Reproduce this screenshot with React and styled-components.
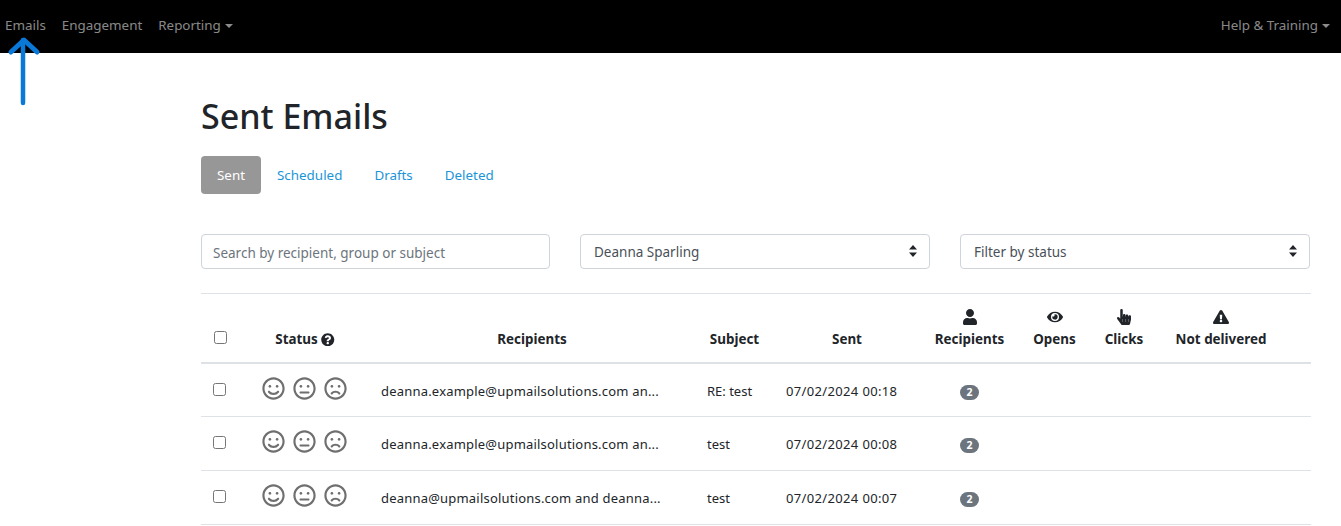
import React from "react";
import styled, { createGlobalStyle } from "styled-components";
import {
  FaUser,
  FaEye,
  FaHandPointer,
  FaExclamationTriangle,
  FaQuestionCircle,
  FaRegSmile,
  FaRegMeh,
  FaRegFrown,
} from "react-icons/fa";

const GlobalStyle = createGlobalStyle`
  * { box-sizing: border-box; }
  html, body { margin: 0; background: #fff; overflow: hidden; }
  body {
    font-family: "Noto Sans", "Open Sans", sans-serif;
    font-size: 13.5px;
    color: #212529;
  }
`;

const Nav = styled.nav`
  height: 53px;
  background: #000;
  display: flex;
  align-items: center;
  justify-content: space-between;
  padding: 0 11px 2px 5px;
`;

const NavGroup = styled.div`
  display: flex;
  gap: 16px;
`;

const NavLink = styled.a`
  color: rgba(255, 255, 255, 0.55);
  font-size: 13.4px;
  line-height: 21px;
  text-decoration: none;
  &::after {
    content: ${(p) => (p.$caret ? '""' : "none")};
    display: inline-block;
    margin-left: 4px;
    vertical-align: 2px;
    border-top: 4px solid;
    border-left: 4px solid transparent;
    border-right: 4px solid transparent;
  }
`;

const Arrow = styled.svg`
  position: absolute;
  left: 5px;
  top: 36px;
  width: 36px;
  height: 72px;
`;

const Main = styled.main`
  padding: 40px 30px 0 201px;
`;

const Title = styled.h1`
  margin: 0 0 17px;
  font-size: 34px;
  line-height: 46px;
  font-weight: 500;
`;

const Tabs = styled.div`
  display: flex;
  margin-bottom: 40px;
`;

const Tab = styled.a`
  height: 38px;
  padding: 0 16px;
  display: flex;
  align-items: center;
  border-radius: 4px;
  font-size: 13.4px;
  text-decoration: none;
  color: ${(p) => (p.$active ? "#fff" : "#1b95d8")};
  background: ${(p) => (p.$active ? "#979797" : "transparent")};
`;

const Filters = styled.div`
  display: grid;
  grid-template-columns: 349px 350px 350px;
  column-gap: 30px;
  padding-bottom: 24px;
  border-bottom: 1px solid #dee2e6;
`;

const SearchInput = styled.input`
  height: 35px;
  width: 100%;
  padding: 2px 11px 0;
  border: 1px solid #ced4da;
  border-radius: 4px;
  font: inherit;
  color: #495057;
  outline: none;
  &::placeholder { color: #6c757d; opacity: 1; }
`;

const SelectWrap = styled.div`
  position: relative;
`;

const Select = styled.select`
  height: 35px;
  width: 100%;
  padding: 0 30px 0 13px;
  appearance: none;
  background: #fff;
  border: 1px solid #ced4da;
  border-radius: 4px;
  font: inherit;
  color: #495057;
  outline: none;
`;

const SelectArrows = styled.svg`
  position: absolute;
  right: 13px;
  top: 11px;
  width: 8px;
  height: 12px;
  pointer-events: none;
`;

const Table = styled.table`
  width: 100%;
  table-layout: fixed;
  border-collapse: collapse;
`;

const Th = styled.th`
  height: 69px;
  padding: 0 0 14px;
  vertical-align: bottom;
  text-align: center;
  font-weight: 700;
  font-size: 13.4px;
  line-height: 18px;
  white-space: nowrap;
  border-bottom: 2px solid #dee2e6;
`;

const CheckTh = styled(Th)`
  padding: 0 0 18px 13px;
  text-align: left;
`;

const HeadIcon = styled.div`
  font-size: 16px;
  line-height: 16px;
  height: 21px;
  display: flex;
  justify-content: center;
  color: #212529;
`;

const HelpIcon = styled(FaQuestionCircle)`
  font-size: 13.5px;
  vertical-align: -2px;
`;

const Tr = styled.tr`
  height: ${(p) => p.$height}px;
  border-bottom: 1px solid #dee2e6;
`;

const Td = styled.td`
  padding: 2px 12px 0;
  font-size: 13px;
  letter-spacing: ${(p) => p.$spacing || 0}px;
  text-align: ${(p) => p.$align || "left"};
  white-space: nowrap;
`;

const CheckCell = styled.td`
  padding: 0 0 ${(p) => p.$lift}px 12px;
`;

const Checkbox = styled.input.attrs({ type: "checkbox" })`
  appearance: none;
  display: block;
  width: 13px;
  height: 13px;
  margin: 0;
  background: #fff;
  border: 1px solid #767676;
  border-radius: 2.5px;
`;

const Faces = styled.div`
  display: flex;
  gap: 8px;
  justify-content: center;
  padding: 0 2px ${(p) => 2 + p.$lift}px 0;
  font-size: 23px;
  color: #6f6f6f;
  line-height: 0;
`;

const Badge = styled.span`
  display: inline-block;
  min-width: 19px;
  padding: 0 6px;
  line-height: 15px;
  border-radius: 8px;
  background: #6c757d;
  color: #fff;
  font-size: 10.5px;
  font-weight: 700;
  letter-spacing: 0;
`;

const rows = [
  { to: "deanna.example@upmailsolutions.com an...", subject: "RE: test", sent: "07/02/2024 00:18", h: 53, lift: 0 },
  { to: "deanna.example@upmailsolutions.com an...", subject: "test", sent: "07/02/2024 00:08", h: 54, lift: 2 },
  { to: "deanna@upmailsolutions.com and deanna...", subject: "test", sent: "07/02/2024 00:07", h: 54, lift: 2 },
];

const colWidths = [40, 128, 326, 79, 146, 99, 71, 68, 126, 27];

const UpDown = () => (
  <SelectArrows viewBox="0 0 8 12" fill="#212529">
    <path d="M4 0 L8 4.500 L0 4.500 Z M4 12 L0 7.500 L8 7.500 Z" />
  </SelectArrows>
);

export default function App() {
  return (
    <>
      <GlobalStyle />
      <Nav>
        <NavGroup>
          <NavLink href="#">Emails</NavLink>
          <NavLink href="#">Engagement</NavLink>
          <NavLink href="#" $caret>Reporting</NavLink>
        </NavGroup>
        <NavLink href="#" $caret>Help &amp; Training</NavLink>
      </Nav>
      <Arrow viewBox="0 0 36 72" fill="none" stroke="#0a78d7" strokeLinecap="round" strokeLinejoin="round">
        <path d="M18 4 L18 67" strokeWidth="4.500" />
        <path d="M6 16 L19 4 L32 16" strokeWidth="5" />
      </Arrow>
      <Main>
        <Title>Sent Emails</Title>
        <Tabs>
          <Tab href="#" $active>Sent</Tab>
          <Tab href="#">Scheduled</Tab>
          <Tab href="#">Drafts</Tab>
          <Tab href="#">Deleted</Tab>
        </Tabs>
        <Filters>
          <SearchInput placeholder="Search by recipient, group or subject" />
          <SelectWrap>
            <Select defaultValue="Deanna Sparling">
              <option>Deanna Sparling</option>
            </Select>
            <UpDown />
          </SelectWrap>
          <SelectWrap>
            <Select defaultValue="">
              <option value="">Filter by status</option>
            </Select>
            <UpDown />
          </SelectWrap>
        </Filters>
        <Table>
          <colgroup>
            {colWidths.map((w, i) => (
              <col key={i} width={w} />
            ))}
          </colgroup>
          <thead>
            <tr>
              <CheckTh><Checkbox /></CheckTh>
              <Th>Status <HelpIcon /></Th>
              <Th>Recipients</Th>
              <Th>Subject</Th>
              <Th>Sent</Th>
              <Th><HeadIcon><FaUser /></HeadIcon>Recipients</Th>
              <Th><HeadIcon><FaEye /></HeadIcon>Opens</Th>
              <Th><HeadIcon><FaHandPointer /></HeadIcon>Clicks</Th>
              <Th><HeadIcon><FaExclamationTriangle /></HeadIcon>Not delivered</Th>
              <Th />
            </tr>
          </thead>
          <tbody>
            {rows.map((r, i) => (
              <Tr key={i} $height={r.h}>
                <CheckCell $lift={r.lift}><Checkbox /></CheckCell>
                <td>
                  <Faces $lift={r.lift}><FaRegSmile /><FaRegMeh /><FaRegFrown /></Faces>
                </td>
                <Td $spacing={0.2}>{r.to}</Td>
                <Td>{r.subject}</Td>
                <Td $spacing={0.35}>{r.sent}</Td>
                <Td $align="center"><Badge>2</Badge></Td>
                <td />
                <td />
                <td />
                <td />
              </Tr>
            ))}
          </tbody>
        </Table>
      </Main>
    </>
  );
}
